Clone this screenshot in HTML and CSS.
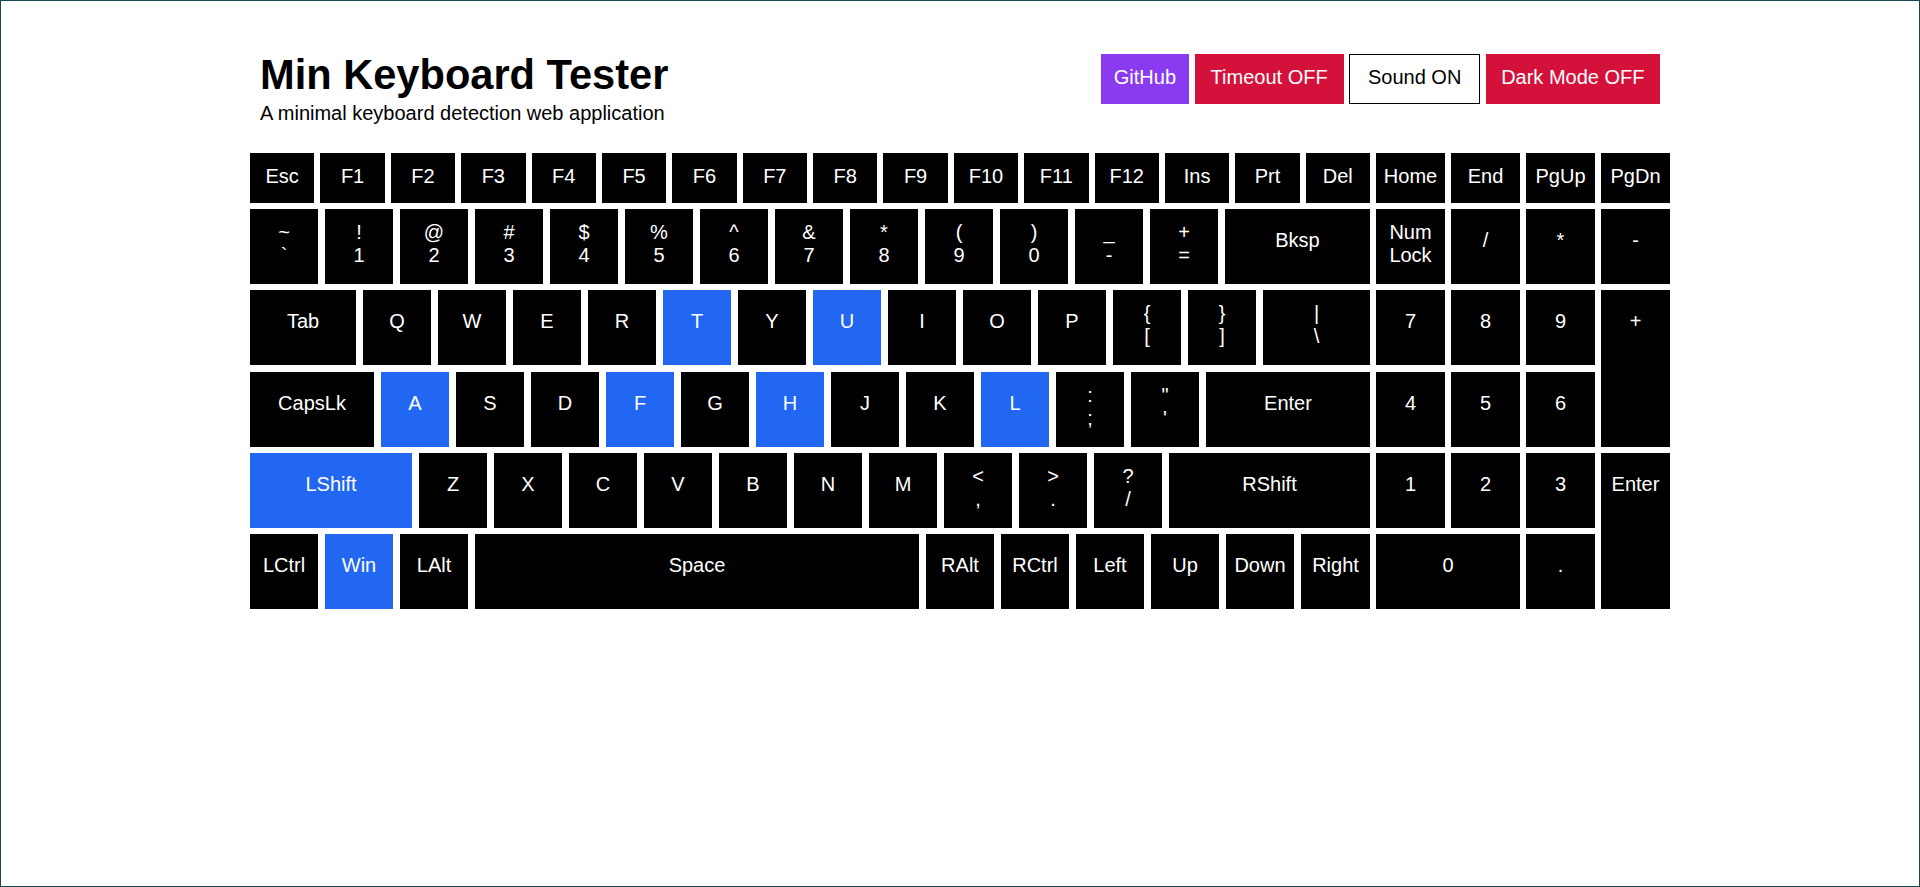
FILE: index.html
```html
<!DOCTYPE html>
<html lang="en">
<head>
<meta charset="utf-8">
<title>Min Keyboard Tester</title>
<link rel="stylesheet" href="styles.css">
</head>
<body>
<div class="page">
  <div class="container">
    <header class="header">
      <div class="titles">
        <h1 class="title">Min Keyboard Tester</h1>
        <p class="subtitle">A minimal keyboard detection web application</p>
      </div>
      <div class="actions">
        <a class="btn btn-github" href="#">GitHub</a>
        <button class="btn btn-timeout">Timeout OFF</button>
        <button class="btn btn-sound">Sound ON</button>
        <button class="btn btn-dark">Dark Mode OFF</button>
      </div>
    </header>

    <div class="keyboard">
      <div class="main">
        <div class="row row-f">
          <div class="key fkey">Esc</div>
          <div class="key fkey">F1</div>
          <div class="key fkey">F2</div>
          <div class="key fkey">F3</div>
          <div class="key fkey">F4</div>
          <div class="key fkey">F5</div>
          <div class="key fkey">F6</div>
          <div class="key fkey">F7</div>
          <div class="key fkey">F8</div>
          <div class="key fkey">F9</div>
          <div class="key fkey">F10</div>
          <div class="key fkey">F11</div>
          <div class="key fkey">F12</div>
          <div class="key fkey">Ins</div>
          <div class="key fkey">Prt</div>
          <div class="key fkey">Del</div>
        </div>

        <div class="row">
          <div class="key two">~<br>`</div>
          <div class="key two">!<br>1</div>
          <div class="key two">@<br>2</div>
          <div class="key two">#<br>3</div>
          <div class="key two">$<br>4</div>
          <div class="key two">%<br>5</div>
          <div class="key two">^<br>6</div>
          <div class="key two">&amp;<br>7</div>
          <div class="key two">*<br>8</div>
          <div class="key two">(<br>9</div>
          <div class="key two">)<br>0</div>
          <div class="key two">_<br>-</div>
          <div class="key two">+<br>=</div>
          <div class="key fill">Bksp</div>
        </div>

        <div class="row">
          <div class="key u15">Tab</div>
          <div class="key">Q</div>
          <div class="key">W</div>
          <div class="key">E</div>
          <div class="key">R</div>
          <div class="key on">T</div>
          <div class="key">Y</div>
          <div class="key on">U</div>
          <div class="key">I</div>
          <div class="key">O</div>
          <div class="key">P</div>
          <div class="key two">{<br>[</div>
          <div class="key two">}<br>]</div>
          <div class="key two fill">|<br>\</div>
        </div>

        <div class="row">
          <div class="key u175">CapsLk</div>
          <div class="key on">A</div>
          <div class="key">S</div>
          <div class="key">D</div>
          <div class="key on">F</div>
          <div class="key">G</div>
          <div class="key on">H</div>
          <div class="key">J</div>
          <div class="key">K</div>
          <div class="key on">L</div>
          <div class="key two">:<br>;</div>
          <div class="key two">"<br>'</div>
          <div class="key fill">Enter</div>
        </div>

        <div class="row">
          <div class="key u225 on">LShift</div>
          <div class="key">Z</div>
          <div class="key">X</div>
          <div class="key">C</div>
          <div class="key">V</div>
          <div class="key">B</div>
          <div class="key">N</div>
          <div class="key">M</div>
          <div class="key two">&lt;<br>,</div>
          <div class="key two">&gt;<br>.</div>
          <div class="key two">?<br>/</div>
          <div class="key fill">RShift</div>
        </div>

        <div class="row">
          <div class="key">LCtrl</div>
          <div class="key on">Win</div>
          <div class="key">LAlt</div>
          <div class="key u6">Space</div>
          <div class="key">RAlt</div>
          <div class="key">RCtrl</div>
          <div class="key">Left</div>
          <div class="key">Up</div>
          <div class="key">Down</div>
          <div class="key fill">Right</div>
        </div>
      </div>

      <div class="numpad">
        <div class="key fkey">Home</div>
        <div class="key fkey">End</div>
        <div class="key fkey">PgUp</div>
        <div class="key fkey">PgDn</div>

        <div class="key two">Num<br>Lock</div>
        <div class="key">/</div>
        <div class="key">*</div>
        <div class="key">-</div>

        <div class="key">7</div>
        <div class="key">8</div>
        <div class="key">9</div>
        <div class="key tall">+</div>

        <div class="key">4</div>
        <div class="key">5</div>
        <div class="key">6</div>

        <div class="key">1</div>
        <div class="key">2</div>
        <div class="key">3</div>
        <div class="key tall">Enter</div>

        <div class="key wide">0</div>
        <div class="key">.</div>
      </div>
    </div>
  </div>
</div>
</body>
</html>
```

FILE: styles.css
```css
html, body {
  margin: 0;
  padding: 0;
  background: #ffffff;
}

body {
  font-family: "Liberation Sans", Arial, Helvetica, sans-serif;
  color: #000000;
}

.page {
  min-height: 100vh;
  box-sizing: border-box;
  border: 1px solid #1b4652;
}

.container {
  width: 1420px;
  margin: 0 auto;
  padding-top: 50px;
}

/* Header */
.header {
  display: flex;
  justify-content: space-between;
  align-items: flex-start;
  padding: 0 10px;
}

.title {
  margin: 0;
  font-size: 41.6px;
  font-weight: bold;
  line-height: normal;
}

.subtitle {
  margin: 3px 0 0;
  font-size: 20px;
  line-height: 23px;
}

.actions {
  display: flex;
  gap: 5.3px;
  margin-top: 3px;
}

.btn {
  display: block;
  box-sizing: border-box;
  height: 50px;
  padding: 12px 16px 15px;
  border: 0;
  font-family: inherit;
  font-size: 20px;
  line-height: 23px;
  color: #ffffff;
  text-decoration: none;
  cursor: pointer;
  white-space: nowrap;
}

.btn-github {
  background: #8a3bef;
  padding-left: 13.25px;
  padding-right: 13.25px;
}

.btn-timeout {
  background: #d3113b;
}

.btn-sound {
  background: #ffffff;
  color: #000000;
  border: 1px solid #000000;
  padding: 11px 18px 14px;
}

.btn-dark {
  background: #d3113b;
  padding-left: 15.5px;
  padding-right: 15.5px;
}

/* Keyboard */
.keyboard {
  display: flex;
  gap: 6px;
  margin-top: 28px;
}

.main {
  width: 1120px;
  display: flex;
  flex-direction: column;
  gap: 6.2px;
}

.row {
  display: flex;
  gap: 7px;
  height: 75px;
}

.row-f {
  gap: 6px;
  height: 50px;
}

.key {
  box-sizing: border-box;
  background: #000000;
  color: #ffffff;
  font-size: 20px;
  line-height: 23px;
  text-align: center;
  padding-top: 20px;
  white-space: nowrap;
  flex: 0 0 68px;
}

.key.on {
  background: #2167f1;
}

.key.two {
  padding-top: 12px;
}

.key.fkey {
  padding-top: 11.5px;
}

.row-f .key {
  flex: 1 1 0;
}

.u15 { flex-basis: 106px; }
.u175 { flex-basis: 124px; }
.u225 { flex-basis: 162px; }
.u6 { flex-basis: 444px; }

.row .key.fill {
  flex: 1 1 auto;
}

.numpad {
  display: grid;
  grid-template-columns: repeat(4, 69px);
  grid-template-rows: 50px repeat(5, 75px);
  column-gap: 6px;
  row-gap: 6.2px;
}

.numpad .tall {
  grid-row: span 2;
}

.numpad .wide {
  grid-column: span 2;
}
```
